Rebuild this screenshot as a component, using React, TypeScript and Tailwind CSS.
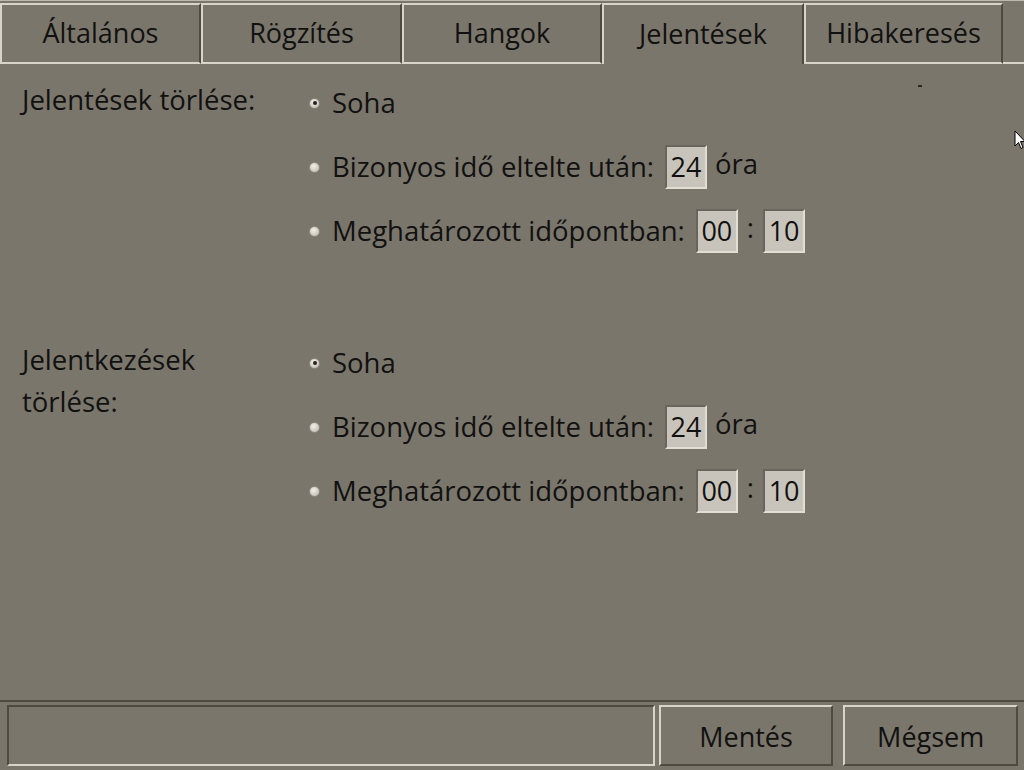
import React from 'react';

const font = { fontFamily: '"Open Sans", "Noto Sans", sans-serif' };

const tabs = [
  { label: 'Általános', w: 'w-[201px]' },
  { label: 'Rögzítés', w: 'w-[201px]' },
  { label: 'Hangok', w: 'w-[200px]' },
  { label: 'Jelentések', w: 'w-[202px]' },
  { label: 'Hibakeresés', w: 'w-[199px]' },
];
const ACTIVE = 3;

function Radio({ checked }: { checked?: boolean }) {
  return (
    <span className="w-[11px] h-[11px] rounded-full bg-[radial-gradient(circle_at_40%_35%,#f2efe9,#b9b3a8)] border border-[#8f897e] flex items-center justify-center shrink-0">
      {checked && <span className="w-[4px] h-[4px] rounded-full bg-[#222]" />}
    </span>
  );
}

function Field({ value }: { value: string }) {
  return (
    <span className="w-[42px] h-[44px] bg-[#c9c4bb] border-2 border-t-[#6a655c] border-l-[#6a655c] border-b-[#e2ded6] border-r-[#e2ded6] flex items-center justify-center text-[27px] text-[#111]">
      {value}
    </span>
  );
}

function Options() {
  return (
    <div className="flex flex-col">
      <div className="h-[64px] flex items-center">
        <Radio checked />
        <span className="ml-[12px]">Soha</span>
      </div>
      <div className="h-[64px] flex items-center">
        <Radio />
        <span className="ml-[12px] mr-[11px]">Bizonyos idő eltelte után:</span>
        <Field value="24" />
        <span className="-mt-[6px] ml-[8px]">óra</span>
      </div>
      <div className="h-[64px] flex items-center">
        <Radio />
        <span className="ml-[12px] mr-[11px]">Meghatározott időpontban:</span>
        <Field value="00" />
        <span className="mx-[9px] -mt-[6px]">:</span>
        <Field value="10" />
      </div>
    </div>
  );
}

export default function App() {
  return (
    <div style={font} className="w-[1024px] h-[770px] bg-[#7b766b] text-[#111] flex flex-col overflow-hidden relative">
      {/* tabs */}
      <div className="h-[64px] flex pt-[2px] border-t border-[#bdb8ad]">
        {tabs.map((t, i) => (
          <div
            key={t.label}
            className={
              t.w +
              (i === ACTIVE
                ? ' flex items-start justify-center pt-[9px] text-[27px] border-l-2 border-t-2 border-r-2 border-l-[#d8d4cb] border-t-[#d8d4cb] border-r-[#4e4a42]'
                : ' flex items-center justify-center text-[27px] border-l-2 border-t-2 border-r-2 border-b-2 border-l-[#d8d4cb] border-t-[#d8d4cb] border-r-[#4e4a42] border-b-[#d8d4cb]')
            }
          >
            {t.label}
          </div>
        ))}
        <div className="flex-1 border-b-2 border-[#d8d4cb]" />
      </div>

      {/* content */}
      <div className="flex-1 pt-[7px] text-[27.5px] relative">
        <div className="flex mb-[68px]">
          <div className="w-[309px] pl-[22px] pt-[8px] leading-[42px]">Jelentések törlése:</div>
          <Options />
        </div>
        <div className="flex">
          <div className="w-[309px] pl-[22px] pt-[8px] leading-[42px]">
            Jelentkezések
            <br />
            törlése:
          </div>
          <Options />
        </div>
        <span className="absolute left-[918px] top-[21px] w-[4px] h-[2px] bg-[#2a2824]" />
      </div>

      {/* bottom bar */}
      <div className="h-[70px] border-t-2 border-[#4e4a42] flex items-stretch pt-[3px] pb-[4px] pl-[7px] pr-[6px]">
        <div className="w-[649px] border-2 border-t-[#4e4a42] border-l-[#4e4a42] border-b-[#d8d4cb] border-r-[#d8d4cb]" />
        <button className="ml-[4px] w-[175px] border-2 border-t-[#d8d4cb] border-l-[#d8d4cb] border-b-[#4e4a42] border-r-[#4e4a42] text-[27px] pt-[4px]">
          Mentés
        </button>
        <button className="ml-[10px] w-[175px] border-2 border-t-[#d8d4cb] border-l-[#d8d4cb] border-b-[#4e4a42] border-r-[#4e4a42] text-[27px] pt-[4px]">
          Mégsem
        </button>
      </div>

      {/* mouse pointer */}
      <svg className="absolute left-[1014px] top-[130px]" width="12" height="20" viewBox="0 0 12 20">
        <path d="M1 1 L1 16 L4.5 12.5 L7 18.5 L9 17.5 L6.5 11.5 L11 11.5 Z" fill="#fff" stroke="#000" strokeWidth="1" />
      </svg>
    </div>
  );
}
